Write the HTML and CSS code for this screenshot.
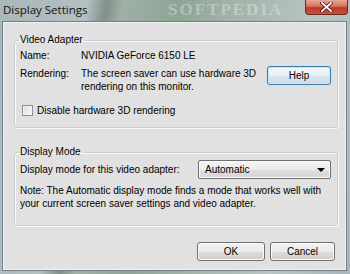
FILE: index.html
```html
<!DOCTYPE html>
<html lang="en">
<head>
  <meta charset="UTF-8" />
  <title>Display Settings</title>
  <link rel="stylesheet" href="styles.css">
</head>
<body>
  <div class="window">
    <div class="titlebar">
      <span class="title">Display Settings</span>
      <span class="watermark">SOFTPEDIA</span>
      <div class="close">
        <svg width="13" height="10" viewBox="0 0 13 10">
          <path d="M2 1 L11 9 M11 1 L2 9" stroke="#4a1410" stroke-width="3.4" stroke-linecap="square"/>
          <path d="M2 1 L11 9 M11 1 L2 9" stroke="#ffffff" stroke-width="1.8" stroke-linecap="square"/>
        </svg>
      </div>
    </div>

    <div class="client">
      <fieldset class="group adapter">
        <legend>Video Adapter</legend>
        <div class="row">
          <span class="key">Name:</span>
          <span>NVIDIA GeForce 6150 LE</span>
        </div>
        <div class="row render">
          <span class="key">Rendering:</span>
          <span class="desc">The screen saver can use hardware 3D rendering on this monitor.</span>
          <button class="btn help">Help</button>
        </div>
        <label class="check"><span class="box"></span>Disable hardware 3D rendering</label>
      </fieldset>

      <fieldset class="group mode">
        <legend>Display Mode</legend>
        <div class="row pick">
          <span>Display mode for this video adapter:</span>
          <div class="select">Automatic<span class="arrow"></span></div>
        </div>
        <p class="note">Note: The Automatic display mode finds a mode that works well with your current screen saver settings and video adapter.</p>
      </fieldset>

      <div class="actions">
        <button class="btn">OK</button>
        <button class="btn">Cancel</button>
      </div>
    </div>
  </div>
</body>
</html>
```

FILE: styles.css
```css
body {
  margin: 0;
  font-family: "Liberation Sans", Arial, sans-serif;
  font-size: 10px;
  color: #000;
}
.window {
  width: 350px;
  height: 274px;
  display: flex;
  flex-direction: column;
  background: linear-gradient(100deg, #a9b7bb 0%, #b3c0c2 22%, #7f9189 27%, #9fb0a6 31%, #8ea596 45%, #a3b4aa 60%, #b9c4c4 80%, #aab6ba 100%);
  overflow: hidden;
}
.titlebar {
  height: 22px;
  flex: none;
  position: relative;
}
.title {
  display: block;
  padding: 3px 0 0 3px;
  font-family: "Open Sans", "Liberation Sans", sans-serif;
  font-size: 11.5px;
  line-height: 13px;
  color: #111;
}
.watermark {
  position: absolute;
  left: 168px;
  top: 1px;
  font-family: "Liberation Serif", serif;
  font-weight: bold;
  font-size: 17px;
  line-height: 18px;
  letter-spacing: 2px;
  color: rgba(235, 240, 235, 0.4);
}
.close {
  position: absolute;
  top: 0;
  right: 2px;
  width: 41px;
  height: 14px;
  border: 1px solid #6b2a22;
  border-top: none;
  border-radius: 0 0 4px 4px;
  background: linear-gradient(#e9a796 0%, #d7705e 45%, #bd3a28 55%, #c7503a 100%);
  display: flex;
  align-items: center;
  justify-content: center;
}
.client {
  flex: 1;
  margin: 0 4px 4px 3px;
  background: #e1e1e1;
  border: 1px solid #f3f3f3;
  box-shadow: 0 0 0 1px #6f7e88;
  padding: 11px 7px 0 10px;
  display: flex;
  flex-direction: column;
}
.group {
  margin: 0;
  padding: 3px 6px 0 5px;
  border: 1px solid #cbcfd3;
  border-radius: 3px;
  box-shadow: inset 1px 1px 0 #f8f8f8, 1px 1px 0 #f8f8f8;
}
.group legend {
  padding: 0 2px 0 1px;
  margin-left: -1px;
  line-height: 12px;
}
.adapter {
  height: 89px;
}
.mode {
  margin-top: 18px;
  height: 75px;
}
.row {
  display: flex;
  line-height: 13px;
}
.key {
  width: 61px;
  flex: none;
}
.render {
  margin-top: 5px;
  align-items: flex-start;
}
.desc {
  width: 180px;
}
.btn {
  font-family: "Liberation Sans", Arial, sans-serif;
  font-size: 10px;
  color: #000;
  height: 19px;
  padding: 0;
  border: 1px solid #707070;
  border-radius: 3px;
  background: linear-gradient(#f2f2f2 0%, #ebebeb 50%, #dddddd 51%, #cfcfcf 100%);
  box-shadow: inset 0 0 0 1px #fbfbfb;
}
.help {
  width: 64px;
  margin-left: auto;
  margin-top: -1px;
  border-color: #3c7fb1;
  box-shadow: inset 0 0 0 1px #c4e5f6, 0 0 1px #7fc4ec;
  background: linear-gradient(#f2f7fa 0%, #e9f1f6 50%, #dbe6ee 51%, #cfdde8 100%);
}
.check {
  display: flex;
  align-items: center;
  margin-top: 11px;
  margin-left: 2px;
  line-height: 13px;
}
.box {
  width: 9px;
  height: 9px;
  border: 1px solid #8f8f8f;
  background: linear-gradient(135deg, #dcdcdc, #fbfbfb);
  box-shadow: inset 0 0 0 1px #f4f4f4;
  margin-right: 4px;
}
.pick {
  align-items: center;
  justify-content: space-between;
  margin-top: -1px;
}
.select {
  width: 125px;
  height: 17px;
  border: 1px solid #707070;
  border-radius: 2px;
  background: linear-gradient(#f4f4f4 0%, #ececec 50%, #dfdfdf 51%, #d4d4d4 100%);
  box-shadow: inset 0 0 0 1px #fafafa;
  padding: 0 0 0 6px;
  display: flex;
  align-items: center;
  justify-content: space-between;
}
.arrow {
  width: 0;
  height: 0;
  border-left: 4px solid transparent;
  border-right: 4px solid transparent;
  border-top: 4px solid #000;
  margin-right: 5px;
}
.note {
  margin: 5px 0 0;
  line-height: 13px;
}
.actions {
  margin-top: auto;
  margin-bottom: 8px;
  display: flex;
  justify-content: flex-end;
  gap: 5px;
  padding-right: 3px;
}
.actions .btn {
  width: 68px;
}
.actions .btn + .btn {
  width: 65px;
}
```
